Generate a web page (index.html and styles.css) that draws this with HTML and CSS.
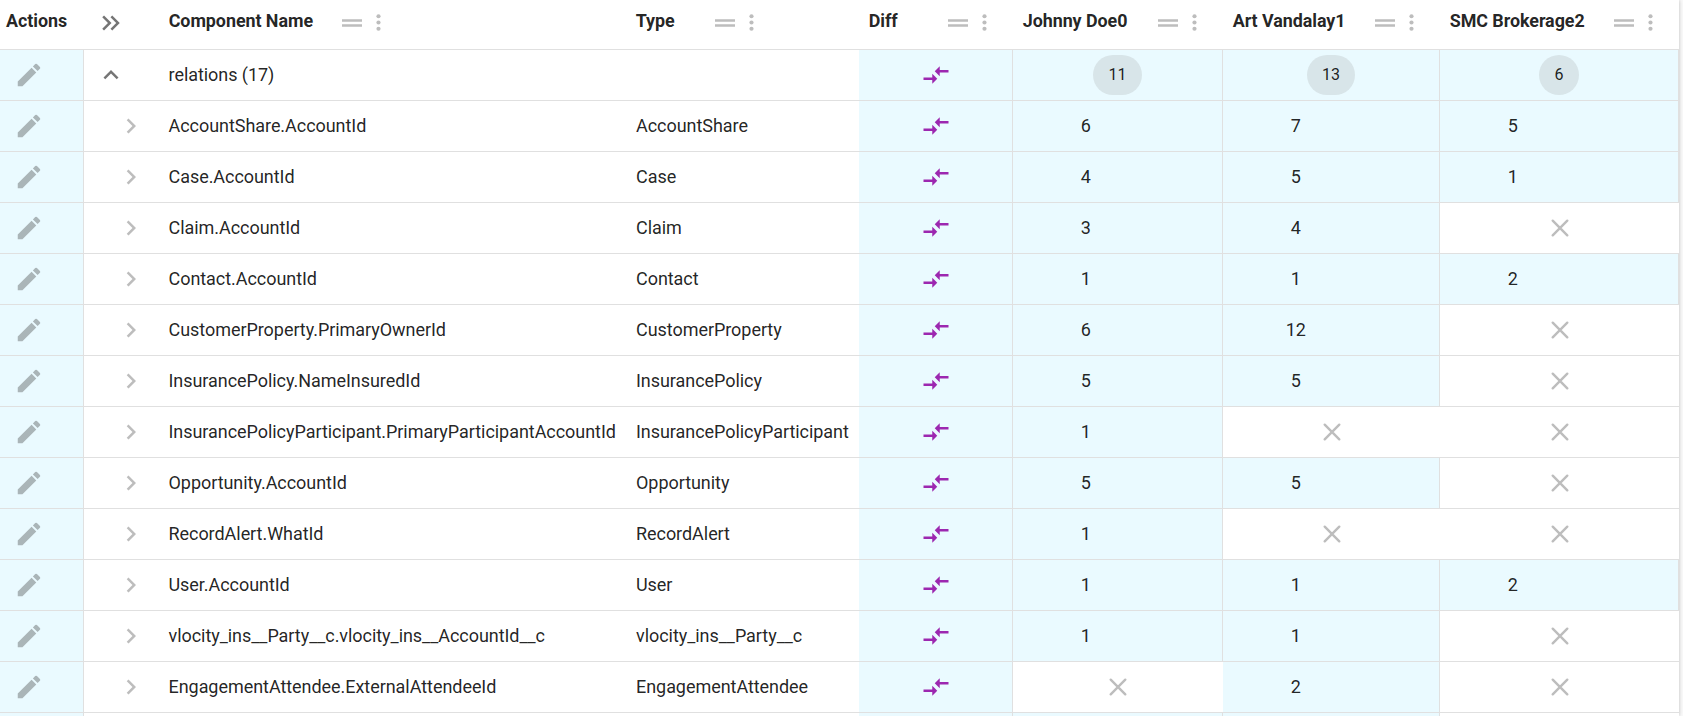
FILE: index.html
```
<!DOCTYPE html>
<html lang="en">
<head>
<meta charset="utf-8">
<title>Components</title>
<link rel="stylesheet" href="styles.css">
</head>
<body>
<svg class="defs" aria-hidden="true">
<symbol id="edit" viewBox="0 0 24 24"><path d="M3 17.25V21h3.75L17.81 9.94l-3.75-3.75L3 17.25zM20.71 7.04a1 1 0 0 0 0-1.41l-2.34-2.34a1 1 0 0 0-1.41 0l-1.83 1.83 3.75 3.75 1.83-1.83z"/></symbol>
<symbol id="right" viewBox="0 0 24 24"><path d="M10 6L8.59 7.41 13.17 12l-4.58 4.59L10 18l6-6z"/></symbol>
<symbol id="up" viewBox="0 0 24 24"><path d="M12 8l-6 6 1.41 1.41L12 10.83l4.59 4.58L18 14z"/></symbol>
<symbol id="double" viewBox="0 0 24 24"><path d="M6.41 6L5 7.41 9.58 12 5 16.59 6.41 18l6-6zM13 6l-1.41 1.41L16.17 12l-4.58 4.59L13 18l6-6z"/></symbol>
<symbol id="diff" viewBox="0 0 24 24"><path d="M9.01 14H2v2h7.01v3L13 15l-3.99-4v3zm5.98-1v-3H22V8h-7.01V5L11 9l3.99 4z"/></symbol>
<symbol id="drag" viewBox="0 0 24 24"><path d="M20 9H4v2h16V9zM4 15h16v-2H4v2z"/></symbol>
<symbol id="more" viewBox="0 0 24 24"><circle cx="12" cy="6" r="2"/><circle cx="12" cy="12" r="2"/><circle cx="12" cy="18" r="2"/></symbol>
<symbol id="none" viewBox="0 0 18 18"><path d="M1.7 1.7l14.6 14.6M16.3 1.7L1.7 16.3" fill="none" stroke="currentColor" stroke-width="2.4" stroke-linecap="round"/></symbol>
</svg>
<main class="table">
<div class="row head">
<div class="th"><span>Actions</span></div>
<div class="toggle"><svg class="icon dark"><use href="#double"/></svg></div>
<div class="th name-head"><span>Component Name</span><svg class="icon drag"><use href="#drag"/></svg><svg class="more"><use href="#more"/></svg></div>
<div class="th type-head"><span>Type</span><svg class="icon drag"><use href="#drag"/></svg><svg class="more"><use href="#more"/></svg></div>
<div class="th"><span>Diff</span><svg class="icon drag"><use href="#drag"/></svg><svg class="more"><use href="#more"/></svg></div>
<div class="th"><span>Johnny Doe0</span><svg class="icon drag"><use href="#drag"/></svg><svg class="more"><use href="#more"/></svg></div>
<div class="th"><span>Art Vandalay1</span><svg class="icon drag"><use href="#drag"/></svg><svg class="more"><use href="#more"/></svg></div>
<div class="th"><span>SMC Brokerage2</span><svg class="icon drag"><use href="#drag"/></svg><svg class="more"><use href="#more"/></svg></div>
</div>
<div class="row"><div class="act"><svg class="icon"><use href="#edit"/></svg></div><div class="toggle"><svg class="icon dark"><use href="#up"/></svg></div><div class="text">relations (17)</div><div class="text type"></div><div class="diff"><svg class="icon"><use href="#diff"/></svg></div><div class="total"><b>11</b></div><div class="total"><b>13</b></div><div class="total"><b>6</b></div></div>
<div class="row"><div class="act"><svg class="icon"><use href="#edit"/></svg></div><div class="toggle child"><svg class="icon"><use href="#right"/></svg></div><div class="text">AccountShare.AccountId</div><div class="text type">AccountShare</div><div class="diff"><svg class="icon"><use href="#diff"/></svg></div><div class="num"><b>6</b></div><div class="num"><b>7</b></div><div class="num"><b>5</b></div></div>
<div class="row"><div class="act"><svg class="icon"><use href="#edit"/></svg></div><div class="toggle child"><svg class="icon"><use href="#right"/></svg></div><div class="text">Case.AccountId</div><div class="text type">Case</div><div class="diff"><svg class="icon"><use href="#diff"/></svg></div><div class="num"><b>4</b></div><div class="num"><b>5</b></div><div class="num"><b>1</b></div></div>
<div class="row"><div class="act"><svg class="icon"><use href="#edit"/></svg></div><div class="toggle child"><svg class="icon"><use href="#right"/></svg></div><div class="text">Claim.AccountId</div><div class="text type">Claim</div><div class="diff"><svg class="icon"><use href="#diff"/></svg></div><div class="num"><b>3</b></div><div class="num"><b>4</b></div><div class="none"><svg><use href="#none"/></svg></div></div>
<div class="row"><div class="act"><svg class="icon"><use href="#edit"/></svg></div><div class="toggle child"><svg class="icon"><use href="#right"/></svg></div><div class="text">Contact.AccountId</div><div class="text type">Contact</div><div class="diff"><svg class="icon"><use href="#diff"/></svg></div><div class="num"><b>1</b></div><div class="num"><b>1</b></div><div class="num"><b>2</b></div></div>
<div class="row"><div class="act"><svg class="icon"><use href="#edit"/></svg></div><div class="toggle child"><svg class="icon"><use href="#right"/></svg></div><div class="text">CustomerProperty.PrimaryOwnerId</div><div class="text type">CustomerProperty</div><div class="diff"><svg class="icon"><use href="#diff"/></svg></div><div class="num"><b>6</b></div><div class="num"><b>12</b></div><div class="none"><svg><use href="#none"/></svg></div></div>
<div class="row"><div class="act"><svg class="icon"><use href="#edit"/></svg></div><div class="toggle child"><svg class="icon"><use href="#right"/></svg></div><div class="text">InsurancePolicy.NameInsuredId</div><div class="text type">InsurancePolicy</div><div class="diff"><svg class="icon"><use href="#diff"/></svg></div><div class="num"><b>5</b></div><div class="num"><b>5</b></div><div class="none"><svg><use href="#none"/></svg></div></div>
<div class="row"><div class="act"><svg class="icon"><use href="#edit"/></svg></div><div class="toggle child"><svg class="icon"><use href="#right"/></svg></div><div class="text">InsurancePolicyParticipant.PrimaryParticipantAccountId</div><div class="text type">InsurancePolicyParticipant</div><div class="diff"><svg class="icon"><use href="#diff"/></svg></div><div class="num"><b>1</b></div><div class="none"><svg><use href="#none"/></svg></div><div class="none"><svg><use href="#none"/></svg></div></div>
<div class="row"><div class="act"><svg class="icon"><use href="#edit"/></svg></div><div class="toggle child"><svg class="icon"><use href="#right"/></svg></div><div class="text">Opportunity.AccountId</div><div class="text type">Opportunity</div><div class="diff"><svg class="icon"><use href="#diff"/></svg></div><div class="num"><b>5</b></div><div class="num"><b>5</b></div><div class="none"><svg><use href="#none"/></svg></div></div>
<div class="row"><div class="act"><svg class="icon"><use href="#edit"/></svg></div><div class="toggle child"><svg class="icon"><use href="#right"/></svg></div><div class="text">RecordAlert.WhatId</div><div class="text type">RecordAlert</div><div class="diff"><svg class="icon"><use href="#diff"/></svg></div><div class="num"><b>1</b></div><div class="none"><svg><use href="#none"/></svg></div><div class="none"><svg><use href="#none"/></svg></div></div>
<div class="row"><div class="act"><svg class="icon"><use href="#edit"/></svg></div><div class="toggle child"><svg class="icon"><use href="#right"/></svg></div><div class="text">User.AccountId</div><div class="text type">User</div><div class="diff"><svg class="icon"><use href="#diff"/></svg></div><div class="num"><b>1</b></div><div class="num"><b>1</b></div><div class="num"><b>2</b></div></div>
<div class="row"><div class="act"><svg class="icon"><use href="#edit"/></svg></div><div class="toggle child"><svg class="icon"><use href="#right"/></svg></div><div class="text">vlocity_ins__Party__c.vlocity_ins__AccountId__c</div><div class="text type">vlocity_ins__Party__c</div><div class="diff"><svg class="icon"><use href="#diff"/></svg></div><div class="num"><b>1</b></div><div class="num"><b>1</b></div><div class="none"><svg><use href="#none"/></svg></div></div>
<div class="row"><div class="act"><svg class="icon"><use href="#edit"/></svg></div><div class="toggle child"><svg class="icon"><use href="#right"/></svg></div><div class="text">EngagementAttendee.ExternalAttendeeId</div><div class="text type">EngagementAttendee</div><div class="diff"><svg class="icon"><use href="#diff"/></svg></div><div class="none"><svg><use href="#none"/></svg></div><div class="num"><b>2</b></div><div class="none"><svg><use href="#none"/></svg></div></div>
<div class="row"><div class="act"></div><div class="toggle"></div><div class="text"></div><div class="text type"></div><div class="diff"></div><div class="num"></div><div class="num"></div><div class="none"></div></div>
</main>
</body>
</html>
```
FILE: styles.css
```
* { box-sizing: border-box; }
body {
  margin: 0;
  height: 716px;
  overflow: hidden;
  background: #fafafa;
  font-family: Roboto, "Liberation Sans", sans-serif;
  font-size: 18px;
  letter-spacing: -.05px;
  color: rgba(0, 0, 0, .87);
}
.defs { display: none; }
svg { display: block; flex: none; fill: currentColor; }
.icon { width: 30px; height: 30px; }
.table {
  width: 1679px;
  height: 716px;
  overflow: hidden;
  background: #fff;
  box-shadow: 0 0 4px rgba(0, 0, 0, .25);
}
.row {
  display: grid;
  grid-template-columns: 84px 75px 467px 233px 154px 210px 217px 239px;
  height: 51px;
  border-bottom: 1px solid #e0e0e0;
}
.row > div { display: flex; align-items: center; min-width: 0; }
.head { height: 50px; }
.row > .th { padding: 0 16.5px 3.5px 9.7px; color: #bdbdbd; }
.head > .th:first-child { padding-left: 6px; }
.th span {
  margin-right: auto;
  padding-bottom: 4px;
  font-weight: 700;
  font-size: 17.9px;
  color: rgba(0, 0, 0, .87);
  white-space: nowrap;
}
.row > .name-head { padding-right: 235px; }
.row > .type-head { padding-right: 95px; }
.drag { margin-right: -1px; }
.more { width: 25px; height: 25px; }
.toggle { padding-left: 12px; color: #bdbdbd; }
.head .toggle { padding-bottom: 3px; }
.toggle.child { padding-left: 32px; }
.dark { color: #757575; }
.text { padding: 0 0 2px 9.5px; white-space: nowrap; }
.type { padding-left: 10px; }
.act, .diff, .num, .total {
  background: #eafaff;
  border-right: 1px solid #e0e0e0;
}
.act { padding-left: 14px; color: #aab5b8; }
.diff, .total, .none { justify-content: center; }
.diff { color: #9c27b0; }
.none { color: #bdbdbd; }
.none svg { width: 18px; height: 18px; }
b { font-weight: 400; }
.num b { width: 145.6px; padding-bottom: 2px; text-align: center; }
.total b {
  height: 40px;
  padding: 0 15.5px;
  border-radius: 20px;
  background: #d8e5e9;
  font-size: 16px;
  line-height: 39px;
}
```
